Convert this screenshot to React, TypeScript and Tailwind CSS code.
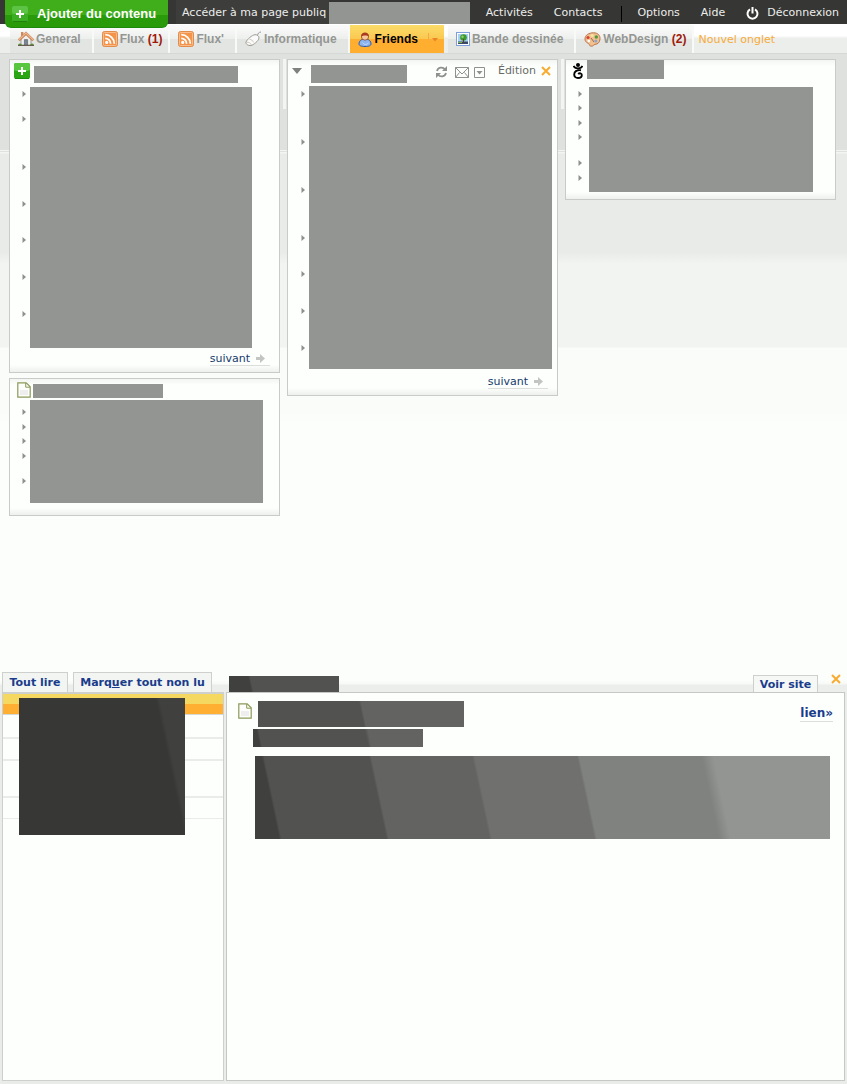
import React from "react";

const dejavu = "font-['DejaVu_Sans',sans-serif]";
const arial = "font-['Liberation_Sans',sans-serif]";

function Rss() {
  return (
    <svg width="16" height="16" viewBox="0 0 16 16" aria-hidden="true">
      <rect x="0.5" y="0.5" width="15" height="15" rx="2" fill="#f4944a" stroke="#e28c4c" />
      <rect x="1.5" y="1.5" width="13" height="13" rx="1" fill="none" stroke="#f9bd8c" />
      <circle cx="4.7" cy="11.4" r="1.6" fill="#fff" />
      <path d="M3.2 7.4a5.4 5.4 0 0 1 5.4 5.4M3.2 3.7a9.1 9.1 0 0 1 9.1 9.1" fill="none" stroke="#fff" strokeWidth="1.8" />
    </svg>
  );
}

function House() {
  return (
    <svg width="16" height="16" viewBox="0 0 16 16" aria-hidden="true">
      <path d="M3 8 8 3.2 13 8v6H3z" fill="#eeeeea" stroke="#8a8a86" strokeWidth="0.8" />
      <path d="M3 1h2.4v4L3 7z" fill="#d08a5c" />
      <path d="M0.8 9.2 8 2.2l7.2 7" fill="none" stroke="#c07a4c" strokeWidth="2.6" />
      <path d="M0.8 9 8 2l7.2 7" fill="none" stroke="#eeb48a" strokeWidth="1.4" />
      <path d="M6.4 14V8.6h3.2V14z" fill="#74869c" stroke="#555" strokeWidth="0.6" />
      <path d="M0 14.6c0-2.6 3-3 4-.6zM16 14.6c0-2.6-3-3-4-.6z" fill="#5b8c34" />
      <path d="M0 14.5h16" stroke="#665f50" />
    </svg>
  );
}

function Mouse() {
  return (
    <svg width="17" height="16" viewBox="0 0 17 16" aria-hidden="true">
      <path d="M12.5 4.5c.3-2 1.2-3.3 3.5-3.5" fill="none" stroke="#9a9a9a" />
      <path d="M1 11c1-2.5 6-7 9-7.3 2-.1 4.3 1.5 4 3.3-.5 3-5.5 7-8 7.5C3.5 15 .3 13 1 11z" fill="#fafafa" stroke="#9c9c98" />
      <path d="M1.8 11.3c2.2-.2 4 1 4.5 2.6M4.5 8.2c1.8.3 3.7 1.7 4.2 3.2" fill="none" stroke="#c9b9a2" strokeWidth="0.8" />
    </svg>
  );
}

function Person() {
  return (
    <svg width="14" height="15" viewBox="0 0 14 15" aria-hidden="true">
      <path d="M1 12c0-3 2-5 6-5s6 2 6 5c0 1.6-2 2.5-6 2.5S1 13.6 1 12z" fill="#8db4ee" stroke="#2b5cae" />
      <path d="M4.5 10.5c2 2.5 4 2.5 6 .5" fill="none" stroke="#c7dcfa" />
      <rect x="3.5" y="1.5" width="7" height="6.5" rx="3" fill="#f6c79a" stroke="#8a4328" strokeWidth="0.8" />
      <path d="M3.2 4.8C2.5-.8 11.5-.8 10.8 4.8 9.5 3 5 3 3.2 4.8z" fill="#a83a20" />
    </svg>
  );
}

function Picture() {
  return (
    <svg width="14" height="14" viewBox="0 0 14 14" aria-hidden="true">
      <rect x="0.5" y="0.5" width="13" height="13" fill="#fff" stroke="#7f9fdc" />
      <rect x="2" y="2" width="10" height="10" fill="#a9cff5" />
      <path d="M2 9.5h10V12H2z" fill="#3a4a64" />
      <circle cx="7.5" cy="5.5" r="3.3" fill="#3f9a2e" />
      <circle cx="6.5" cy="4.8" r="1.2" fill="#8ed069" />
      <path d="M7.5 7v4" stroke="#5b4326" />
      <path d="M2 10.5h4" stroke="#77b455" />
    </svg>
  );
}

function Palette() {
  return (
    <svg width="17" height="15" viewBox="0 0 17 15" aria-hidden="true">
      <path d="M1 7C1 3 5 .8 9.5.8S16.3 3.5 16 7s-2 5-5 5.4c-1.5.2-1.5 1.8-3.5 1.8-1.5 0-2-.7-2.2-1.7C5 11 1 11 1 7z" fill="#f2c090" stroke="#b8764a" />
      <circle cx="4" cy="5.5" r="1.6" fill="#d6422e" />
      <circle cx="8.2" cy="3.6" r="1.5" fill="#f5e6a0" />
      <circle cx="12.3" cy="5" r="1.7" fill="#4e9a3c" />
      <circle cx="11.8" cy="9" r="1.5" fill="#8aa5d4" />
      <circle cx="4.8" cy="9" r="1.3" fill="#fff" />
      <path d="m7 6 3 4" stroke="#9a6a48" />
    </svg>
  );
}

function Plus({ glassy = false }: { glassy?: boolean }) {
  return (
    <svg width="16" height="16" viewBox="0 0 16 16" aria-hidden="true" className="shrink-0">
      <rect width="16" height="16" rx="2" fill={glassy ? "#3cae24" : "#2aa514"} />
      <rect width="16" height="8" rx="2" fill={glassy ? "#5cc344" : "#58c63e"} />
      <path d="M1 15.5h14" stroke={glassy ? "#23800f" : "#1f8d0e"} />
      <path d="M7 4h2v3h3v2H9v3H7V9H4V7h3z" fill="#fff" />
    </svg>
  );
}

function Page() {
  return (
    <svg width="14" height="16" viewBox="0 0 14 16" aria-hidden="true" className="shrink-0">
      <path d="M.8.8h8.4l4 4v10.4H.8z" fill="#fdfdfb" stroke="#8a9a58" strokeWidth="1.2" />
      <path d="M3 8h8v5H3z" fill="#eeeeee" />
      <path d="M8.7 1v4.2H13" fill="none" stroke="#8a9a58" />
    </svg>
  );
}

function Arrow() {
  return (
    <svg width="4" height="6" viewBox="0 0 4 6" aria-hidden="true">
      <path d="M.5 0 4 3 .5 6z" fill="#8f8f8c" />
    </svg>
  );
}

function Power() {
  return (
    <svg width="13" height="13" viewBox="0 0 13 13" aria-hidden="true">
      <path d="M4 2.4a5 5 0 1 0 5 0M6.5 0v6.5" fill="none" stroke="#fff" strokeWidth="2" />
    </svg>
  );
}

function Cross() {
  return (
    <svg width="10" height="10" viewBox="0 0 10 10" aria-hidden="true">
      <path d="m1 1 8 8m0-8L1 9" stroke="#f9ab2f" strokeWidth="2" />
    </svg>
  );
}

function Figure() {
  return (
    <svg width="10" height="16" viewBox="0 0 10 16" aria-hidden="true">
      <circle cx="5" cy="2" r="2" fill="#000" />
      <path d="M0.5 3C2 6.200 8 6.200 9.500 3M8 7.200C3.500 6.700 1.200 8.700 1.200 11.500c0 2.300 1.600 3.500 3.800 3.500s3.800-1.200 3.800-3-2.400-2.300-3.600-.9" fill="none" stroke="#000" strokeWidth="1.900" />
    </svg>
  );
}

function Bullets({ gaps }: { gaps: string[] }) {
  return (
    <ul className="flex w-4 shrink-0 flex-col items-end pr-1">
      {gaps.map((gap, i) => (
        <li key={i} className={gap}>
          <Arrow />
        </li>
      ))}
    </ul>
  );
}

function Next() {
  return (
    <div className="flex justify-end pr-[9px]">
      <a href="#" className="flex items-center gap-[5px] border-b border-[#dcdedc] pr-1 text-[11px] leading-[13px] text-[#163a6c]">
        suivant
        <svg width="11" height="9" viewBox="0 0 11 9" aria-hidden="true">
          <path d="M1 3h4V0l5 4.5L5 9V6H1z" fill="#c3c5c3" />
        </svg>
      </a>
    </div>
  );
}

const card =
  "border border-[#c9cbc9] bg-[#fdfffd] bg-[linear-gradient(to_bottom,#f3f5f3,transparent_6px,transparent_calc(100%-7px),#eef0ee)]";
const gutter = "relative after:absolute after:top-0 after:-right-[6px] after:h-[50px] after:w-[3px] after:bg-[#f3f5f3]";

function Tab({ icon, children, count, active = false }: { icon: React.ReactNode; children: React.ReactNode; count?: string; active?: boolean }) {
  const idle =
    "flex h-7 items-center gap-[2px] border-r-2 border-[#f8faf8] bg-linear-to-b from-[#f8f9f8] from-10% via-[#edefed] via-50% to-[#e3e5e3] to-50% pl-2 text-[#949692]";
  return (
    <a
      href="#"
      className={
        active
          ? "mr-1 flex h-7 items-center gap-[3px] bg-linear-to-b from-[#fbdc68] from-0% via-[#fac850] via-50% to-[#ffae30] to-50% pr-[6px] pl-2 text-black"
          : `${idle} ${count ? "pr-[6px]" : "pr-[11px]"}`
      }
    >
      {icon}
      <span>
        {children}
        {count && <b className="text-[#a01808]"> {count}</b>}
      </span>
      {active && (
        <svg width="13" height="10" viewBox="0 0 13 10" className="mt-2 ml-1 self-start" aria-hidden="true">
          <path d="M3.5 0v8" stroke="#f8a840" />
          <path d="M7 5h6l-3 3.5z" fill="#ea8428" />
        </svg>
      )}
    </a>
  );
}

const g = "bg-[#939592]";

export default function App() {
  return (
    <div
      className={`${dejavu} flex min-h-screen flex-col bg-[#fcfefc] bg-[linear-gradient(to_bottom,#dfe1df_150px,#f3f5f3_150px,#f3f5f3_151px,#dfe1df_151px,#dfe1df_152px,#f3f5f3_152px,#f3f5f3_153px,#e9ebe9_154px,#e9ebe9_252px,#f2f4f2_264px,#f2f4f2_347px,#fafcfa_348px,#fafcfa_410px,#fcfefc_425px)] text-[11px]`}
    >
      <header className="flex h-6 bg-[#363634] text-[#eceeec]">
        <button className={`${arial} relative ml-[5px] flex h-7 w-[163px] shrink-0 items-center gap-[9px] rounded-b-md border-b border-[#1d8a0c] bg-linear-to-b from-[#3fae1a] from-55% to-[#299b0b] to-55% pl-[7px] text-[13px] font-bold text-white`}>
          <Plus glassy />
          Ajouter du contenu
        </button>
        <a href="#" className="ml-2 flex h-6 w-[153px] items-center bg-[#3d3d3b] pt-[3px] pl-[6px] whitespace-nowrap">
          Accéder à ma page publiq
        </a>
        <div className={`mt-[2px] h-[22px] w-[141px] shrink-0 ${g}`} />
        <nav className="flex flex-1 items-center justify-end gap-[21px] pt-[3px] pr-2 whitespace-nowrap">
          <a href="#">Activités</a>
          <a href="#">Contacts</a>
          <span className="-mx-[2px] h-4 border-l border-black" />
          <a href="#" className="-ml-1">Options</a>
          <a href="#">Aide</a>
          <a href="#" className="flex items-center gap-2"><Power />Déconnexion</a>
        </nav>
      </header>
      <nav className={`${arial} flex h-[30px] border-b border-[#d6d8d6] bg-linear-to-b from-white from-40% to-[#eceeec] to-50% pt-px pl-[10px] text-[12px] font-bold whitespace-nowrap`}>
        <Tab icon={<House />}>General</Tab>
        <Tab icon={<Rss />} count="(1)">Flux</Tab>
        <Tab icon={<Rss />}>Flux'</Tab>
        <Tab icon={<Mouse />}>Informatique</Tab>
        <Tab icon={<Person />} active>Friends</Tab>
        <Tab icon={<Picture />}>Bande dessinée</Tab>
        <Tab icon={<Palette />} count="(2)">WebDesign</Tab>
        <a href="#" className={`${dejavu} flex items-center pt-[2px] pl-1 text-[11px] font-normal text-[#f6ab38]`}>Nouvel onglet</a>
      </nav>

      <main className="grid grid-cols-3 items-start gap-[7px] pt-[5px] pr-[11px] pl-[9px]">
        <div className={`${gutter} flex flex-col gap-[5px]`}>
          <section className={`${card} h-[314px]`}>
            <div className="flex h-[27px] gap-1 pt-[3px] pl-1">
              <Plus />
              <div className={`mt-[3px] h-[17px] w-[204px] ${g}`} />
            </div>
            <div className="flex pl-1">
              <Bullets gaps={["mt-1 h-[25px]", "h-12", "h-[37px]", "h-9", "h-[37px]", "h-[37px]", ""]} />
              <div className={`h-[261px] w-[222px] ${g}`} />
            </div>
            <div className="pt-1"><Next /></div>
          </section>
          <section className={`${card} h-[138px]`}>
            <div className="flex h-[21px] gap-[2px] pt-[3px] pl-[7px]">
              <Page />
              <div className={`mt-[2px] h-[14px] w-[130px] ${g}`} />
            </div>
            <div className="flex pl-1">
              <Bullets gaps={["mt-[9px] h-[15px]", "h-[14px]", "h-[15px]", "h-[25px]", ""]} />
              <div className={`h-[103px] w-[233px] ${g}`} />
            </div>
          </section>
        </div>
        <div className={gutter}>
          <section className={`${card} h-[337px]`}>
            <div className="flex h-[26px] pt-1 pr-[6px] pl-1">
              <svg width="10" height="6" viewBox="0 0 10 6" className="mt-1" aria-hidden="true"><path d="M0 0h10L5 6z" fill="#7f817e" /></svg>
              <div className={`ml-[9px] mt-px h-[18px] w-24 ${g}`} />
              <div className="flex h-[14px] flex-1 items-center justify-end gap-[7px] text-[#686a67]">
                <svg width="13" height="12" viewBox="0 0 13 12" className="mt-[2px]" aria-hidden="true"><path d="M2 5a4.5 4.5 0 0 1 8-1.5M11 7a4.5 4.5 0 0 1-8 1.5" fill="none" stroke="#8f918e" strokeWidth="1.8" /><path d="M12 0v5H7zM1 12V7h5z" fill="#8f918e" /></svg>
                <svg width="14" height="11" viewBox="0 0 14 11" className="mt-[2px]" aria-hidden="true"><path d="M.5.5h13v10H.5zM.5.5 7 7l6.5-6.5M.5 10.5l4-5m9 5-4-5" fill="none" stroke="#8f918e" /></svg>
                <svg width="11" height="11" viewBox="0 0 11 11" className="-ml-[2px] mt-[2px]" aria-hidden="true"><path d="M.5.5h10v10H.5z" fill="none" stroke="#8f918e" /><path d="M2.5 4h6l-3 3.5z" fill="#8f918e" /></svg>
                <a href="#" className="ml-[6px]">Édition</a>
                <button aria-label="Fermer" className="-ml-[2px]"><Cross /></button>
              </div>
            </div>
            <div className="flex pl-[5px]">
              <Bullets gaps={["mt-[5px] h-12", "h-12", "h-12", "h-9", "h-[37px]", "h-[37px]", ""]} />
              <div className={`h-[283px] w-[243px] ${g}`} />
            </div>
            <div className="pt-[6px]"><Next /></div>
          </section>
        </div>
        <section className={`${card} h-[141px]`}>
          <div className="flex h-[27px] gap-1 pl-[7px]">
            <div className="pt-[3px]"><Figure /></div>
            <div className={`h-[19px] w-[77px] ${g}`} />
          </div>
          <div className="flex gap-[3px] pl-1">
            <Bullets gaps={["mt-1 h-[14px]", "h-[15px]", "h-[14px]", "h-[26px]", "h-[15px]", ""]} />
            <div className={`h-[105px] w-[224px] ${g}`} />
          </div>
        </section>
      </main>

      <section className="mt-[156px] flex flex-1 flex-col font-bold text-[#1a3c8c]">
        <div className="flex h-5 items-end bg-[linear-gradient(to_bottom,transparent_8px,#f7f9f7_12px,#eceeec_13px)]">
          <button className="ml-[2px] h-5 w-[66px] border border-b-0 border-[#ced0ce] bg-[#f3f5f3] pt-[2px] font-bold whitespace-nowrap">Tout lire</button>
          <button className="ml-[5px] h-5 w-[139px] border border-b-0 border-[#ced0ce] bg-[#f3f5f3] pt-[2px] font-bold whitespace-nowrap">Marq<u>u</u>er tout non lu</button>
          <div className="ml-[17px] h-4 w-[110px] bg-[linear-gradient(78deg,#40413f_22px,#525350_24px)]" />
          <div className="flex-1" />
          <button className="h-[17px] w-[65px] border border-b-0 border-[#ced0ce] bg-[#f6f8f6] pt-px font-bold whitespace-nowrap">Voir site</button>
          <button aria-label="Fermer" className="mr-[6px] ml-[13px] self-start pt-[2px]"><Cross /></button>
        </div>
        <div className="flex flex-1 gap-[2px] bg-[#eaecea] pr-[2px] pb-[3px] pl-[2px]">
          <aside className="relative w-[222px] shrink-0 border border-t-2 border-[#ced0ce] bg-[#fdfffd]">
            <ul>
              <li className="h-[21px] border-b border-[#d6d8d6] bg-linear-to-b from-[#f5d860] from-50% to-[#ffb032] to-50%" />
              <li className="h-6 border-b-2 border-[#eaecea]" />
              <li className="h-[22px] border-b-2 border-[#eaecea]" />
              <li className="h-[37px] border-b-2 border-[#eaecea]" />
              <li className="h-[21px] border-b border-[#eaecea]" />
            </ul>
            <div className="absolute top-1 left-4 h-[137px] w-[166px] bg-[linear-gradient(78deg,#373735_162px,#40403e_166px)]" />
          </aside>
          <article className="flex-1 border border-[#c6c8c6] bg-[#fdfffd] pt-2 pr-[14px] pl-[11px]">
            <div className="flex items-start">
              <div className="pt-[2px]"><Page /></div>
              <div className="ml-[6px] h-[26px] w-[206px] bg-[linear-gradient(78deg,#525350_104px,#636462_106px)]" />
              <a href="#" className="mt-1 ml-auto -mr-[3px] border-b border-[#dcdedc] text-[12px] leading-4">lien»</a>
            </div>
            <div className="mt-[2px] ml-[15px] h-[18px] w-[170px] bg-[linear-gradient(78deg,#40413f_7px,#525350_9px,#525350_113px,#636462_116px)]" />
            <div className="mt-[9px] ml-[17px] h-[83px] bg-[linear-gradient(78deg,#40413f_4.1%,#525350_4.5%,#525350_22.2%,#636462_22.6%,#636462_39.6%,#70716f_40%,#70716f_57.3%,#808280_57.7%,#808280_78.3%,#939592_80.3%)]" />
          </article>
        </div>
      </section>
    </div>
  );
}
